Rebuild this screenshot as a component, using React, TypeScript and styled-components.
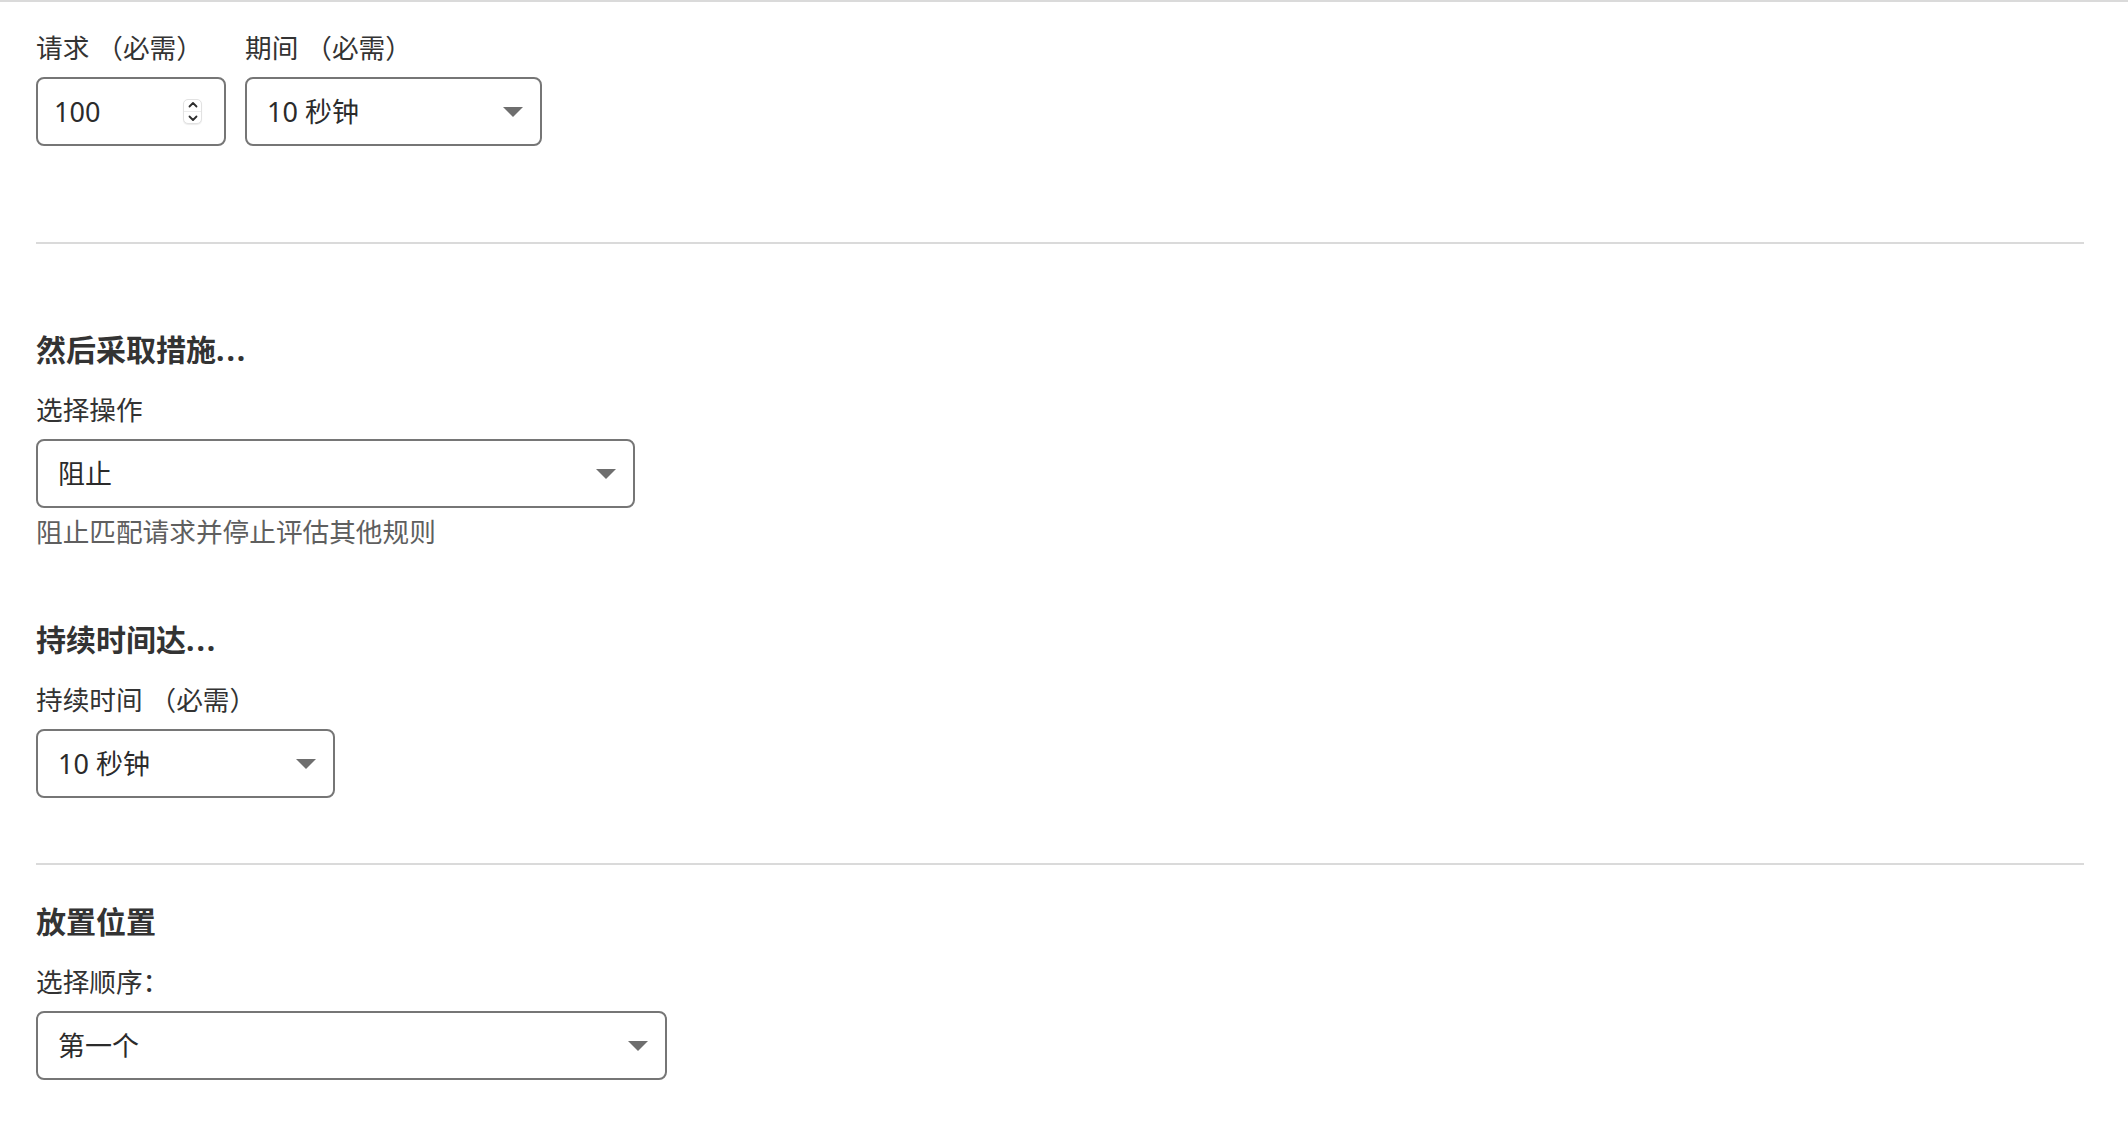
import styled, { createGlobalStyle } from "styled-components";

const GlobalStyle = createGlobalStyle`
  html, body {
    margin: 0;
    padding: 0;
    background: #ffffff;
  }
  body {
    font-family: "Noto Sans", "Noto Sans CJK SC", sans-serif;
    color: #333333;
  }
`;

const Page = styled.div`
  border-top: 2px solid #dadada;
  padding: 28px 44px 40px 36px;
`;

const FieldRow = styled.div`
  display: flex;
  gap: 19px;
`;

const Field = styled.div`
  display: flex;
  flex-direction: column;
`;

const Label = styled.label`
  font-size: 26.67px;
  line-height: 36px;
  color: #333333;
  margin-bottom: 11px;
  white-space: pre;
`;

const Box = styled.div<{ $width: number }>`
  box-sizing: border-box;
  width: ${(p) => p.$width}px;
  height: 69px;
  border: 2px solid #767676;
  border-radius: 8px;
  display: flex;
  align-items: center;
  justify-content: space-between;
  padding: 0 17px 0 20px;
  background: #fff;
`;

const NumberBox = styled(Box)`
  padding: 0 22px 0 16px;
`;

const Value = styled.span`
  font-size: 27px;
  line-height: 36px;
  color: #2b2b2b;
  white-space: pre;
`;

const Arrow = styled.span`
  width: 0;
  height: 0;
  border-left: 10px solid transparent;
  border-right: 10px solid transparent;
  border-top: 10px solid #6e6e6e;
`;

const Spinner = styled.span`
  box-sizing: border-box;
  width: 19px;
  height: 25px;
  border: 1px solid #e2e2e2;
  border-radius: 5px;
  box-shadow: 0 1px 1px rgba(0, 0, 0, 0.08);
  display: flex;
  flex-direction: column;
  align-items: center;
  justify-content: space-around;
  background: #fff;
`;

const SpinLine = styled.span`
  width: 100%;
  height: 1px;
  background: #ececec;
`;

const Divider = styled.hr<{ $top: number }>`
  border: 0;
  height: 2px;
  background: #dadada;
  margin: ${(p) => p.$top}px 0 0 0;
`;

const Section = styled.section<{ $top: number }>`
  margin-top: ${(p) => p.$top}px;
`;

const Heading = styled.h3`
  margin: 0 0 22px 0;
  font-size: 30px;
  line-height: 40px;
  font-weight: 700;
  color: #333333;
`;

const Dots = styled.span`
  letter-spacing: 2px;
`;

const Help = styled.div`
  margin-top: 6px;
  font-size: 26.67px;
  line-height: 36px;
  color: #5f5f5f;
`;

function Chevron({ up }: { up?: boolean }) {
  return (
    <svg width="10" height="7" viewBox="0 0 10 7">
      <path
        d={up ? "M1.5 5.5 L5 2 L8.5 5.5" : "M1.5 1.5 L5 5 L8.5 1.5"}
        fill="none"
        stroke="#2d2d2d"
        strokeWidth="1.8"
        strokeLinecap="round"
        strokeLinejoin="round"
      />
    </svg>
  );
}

function Select({ value, width }: { value: string; width: number }) {
  return (
    <Box $width={width}>
      <Value>{value}</Value>
      <Arrow />
    </Box>
  );
}

export default function App() {
  return (
    <>
      <GlobalStyle />
      <Page>
        <FieldRow>
          <Field>
            <Label>请求 （必需）</Label>
            <NumberBox $width={190}>
              <Value>100</Value>
              <Spinner>
                <Chevron up />
                <SpinLine />
                <Chevron />
              </Spinner>
            </NumberBox>
          </Field>
          <Field>
            <Label>期间 （必需）</Label>
            <Select value="10 秒钟" width={297} />
          </Field>
        </FieldRow>

        <Divider $top={96} />

        <Section $top={86}>
          <Heading>
            然后采取措施<Dots>...</Dots>
          </Heading>
          <Field>
            <Label>选择操作</Label>
            <Select value="阻止" width={599} />
          </Field>
          <Help>阻止匹配请求并停止评估其他规则</Help>
        </Section>

        <Section $top={70}>
          <Heading>
            持续时间达<Dots>...</Dots>
          </Heading>
          <Field>
            <Label>持续时间 （必需）</Label>
            <Select value="10 秒钟" width={299} />
          </Field>
        </Section>

        <Divider $top={65} />

        <Section $top={37}>
          <Heading>放置位置</Heading>
          <Field>
            <Label>选择顺序：</Label>
            <Select value="第一个" width={631} />
          </Field>
        </Section>
      </Page>
    </>
  );
}
